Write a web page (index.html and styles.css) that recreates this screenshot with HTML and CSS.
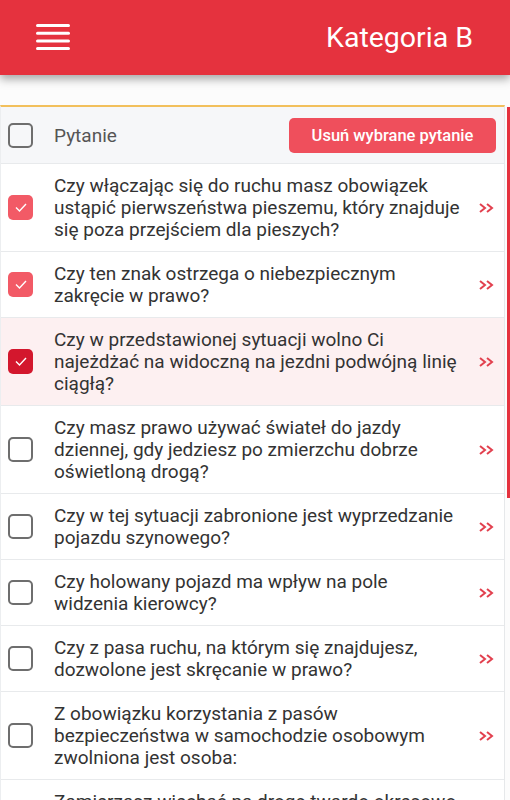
FILE: index.html
```html
<!DOCTYPE html>
<html lang="pl">
<head>
    <meta charset="UTF-8">
    <meta name="viewport" content="width=device-width, initial-scale=1.0">
    <title>Kategoria B</title>
    <link rel="stylesheet" href="styles.css">
</head>
<body>
    <header class="topbar">
        <button class="menu-btn" aria-label="Menu">
            <svg width="34" height="27" viewBox="0 0 34 27">
                <rect x="0" y="0" width="34" height="3" rx="1.5" fill="#fff"/>
                <rect x="0" y="7.7" width="34" height="3" rx="1.5" fill="#fff"/>
                <rect x="0" y="15.4" width="34" height="3" rx="1.5" fill="#fff"/>
                <rect x="0" y="23" width="34" height="3" rx="1.5" fill="#fff"/>
            </svg>
        </button>
        <h1 class="title">Kategoria B</h1>
    </header>

    <main class="list-card">
        <div class="list-head">
            <span class="box"></span>
            <span class="head-label">Pytanie</span>
            <button class="delete-btn">Usuń wybrane pytanie</button>
        </div>

        <ul class="questions">
            <li class="question">
                <span class="box checked"><svg width="12" height="9" viewBox="0 0 12 9"><polyline points="1,4.5 4.5,8 11,1" fill="none" stroke="#fff" stroke-width="1.4"/></svg></span>
                <span class="q-text">Czy włączając się do ruchu masz obowiązek ustąpić pierwszeństwa pieszemu, który znajduje się poza przejściem dla pieszych?</span>
                <svg class="chevron" width="15" height="10" viewBox="0 0 15 10"><polyline points="1,1 6,5 1,9"/><polyline points="8,1 13,5 8,9"/></svg>
            </li>
            <li class="question">
                <span class="box checked"><svg width="12" height="9" viewBox="0 0 12 9"><polyline points="1,4.5 4.5,8 11,1" fill="none" stroke="#fff" stroke-width="1.4"/></svg></span>
                <span class="q-text">Czy ten znak ostrzega o niebezpiecznym zakręcie w prawo?</span>
                <svg class="chevron" width="15" height="10" viewBox="0 0 15 10"><polyline points="1,1 6,5 1,9"/><polyline points="8,1 13,5 8,9"/></svg>
            </li>
            <li class="question active">
                <span class="box checked"><svg width="12" height="9" viewBox="0 0 12 9"><polyline points="1,4.5 4.5,8 11,1" fill="none" stroke="#fff" stroke-width="1.4"/></svg></span>
                <span class="q-text">Czy w przedstawionej sytuacji wolno Ci najeżdżać na widoczną na jezdni podwójną linię ciągłą?</span>
                <svg class="chevron" width="15" height="10" viewBox="0 0 15 10"><polyline points="1,1 6,5 1,9"/><polyline points="8,1 13,5 8,9"/></svg>
            </li>
            <li class="question">
                <span class="box"></span>
                <span class="q-text">Czy masz prawo używać świateł do jazdy dziennej, gdy jedziesz po zmierzchu dobrze oświetloną drogą?</span>
                <svg class="chevron" width="15" height="10" viewBox="0 0 15 10"><polyline points="1,1 6,5 1,9"/><polyline points="8,1 13,5 8,9"/></svg>
            </li>
            <li class="question">
                <span class="box"></span>
                <span class="q-text">Czy w tej sytuacji zabronione jest wyprzedzanie pojazdu szynowego?</span>
                <svg class="chevron" width="15" height="10" viewBox="0 0 15 10"><polyline points="1,1 6,5 1,9"/><polyline points="8,1 13,5 8,9"/></svg>
            </li>
            <li class="question">
                <span class="box"></span>
                <span class="q-text">Czy holowany pojazd ma wpływ na pole widzenia kierowcy?</span>
                <svg class="chevron" width="15" height="10" viewBox="0 0 15 10"><polyline points="1,1 6,5 1,9"/><polyline points="8,1 13,5 8,9"/></svg>
            </li>
            <li class="question">
                <span class="box"></span>
                <span class="q-text">Czy z pasa ruchu, na którym się znajdujesz, dozwolone jest skręcanie w prawo?</span>
                <svg class="chevron" width="15" height="10" viewBox="0 0 15 10"><polyline points="1,1 6,5 1,9"/><polyline points="8,1 13,5 8,9"/></svg>
            </li>
            <li class="question">
                <span class="box"></span>
                <span class="q-text">Z obowiązku korzystania z pasów bezpieczeństwa w samochodzie osobowym zwolniona jest osoba:</span>
                <svg class="chevron" width="15" height="10" viewBox="0 0 15 10"><polyline points="1,1 6,5 1,9"/><polyline points="8,1 13,5 8,9"/></svg>
            </li>
            <li class="question">
                <span class="box"></span>
                <span class="q-text">Zamierzasz wjechać na drogę twardo okresowo zamkniętą dla ruchu. Czy możesz to zrobić?</span>
                <svg class="chevron" width="15" height="10" viewBox="0 0 15 10"><polyline points="1,1 6,5 1,9"/><polyline points="8,1 13,5 8,9"/></svg>
            </li>
        </ul>

        <div class="scroll-thumb"></div>
    </main>
</body>
</html>
```

FILE: styles.css
```css
html, body {
    margin: 0;
    height: 100%;
    overflow: hidden;
}
body {
    font-family: Roboto, "Noto Sans", sans-serif;
    background: #fcfcfc;
    color: #333;
}
.topbar {
    height: 75px;
    background: #e5323e;
    display: flex;
    align-items: center;
    justify-content: space-between;
    padding: 0 37px 0 36px;
    box-shadow: 0 4px 9px rgba(0,0,0,0.35);
    position: relative;
    z-index: 2;
}
.menu-btn {
    background: none;
    border: none;
    padding: 0;
    display: flex;
    cursor: pointer;
}
.title {
    margin: 0;
    color: #fff;
    font-size: 28.5px;
    font-weight: 400;
}
.list-card {
    position: relative;
    margin: 30px 5px 0 0;
    background: #fff;
    border-top: 2px solid #f2c05c;
    border-left: 1px solid #eceef0;
    border-right: 1px solid #e6e8ea;
}
.list-head {
    height: 56px;
    display: flex;
    align-items: center;
    padding: 0 8px 0 7px;
    background: #f6f7f9;
    border-bottom: 1px solid #e8eaec;
}
.box {
    flex: none;
    width: 25px;
    height: 25px;
    box-sizing: border-box;
    border: 2px solid #6e6e6e;
    border-radius: 5px;
    display: flex;
    align-items: center;
    justify-content: center;
}
.box.checked {
    border: none;
    background: #f25a66;
}
.active .box.checked {
    background: #d3172d;
}
.head-label {
    margin-left: 21px;
    font-size: 19px;
    color: #555;
}
.delete-btn {
    margin-left: auto;
    width: 207px;
    height: 35px;
    border: none;
    border-radius: 5px;
    background: #ef4f5c;
    color: #fff;
    font-family: Roboto, sans-serif;
    font-size: 16.5px;
    font-weight: 500;
    cursor: pointer;
}
.questions {
    list-style: none;
    margin: 0;
    padding: 0;
}
.question {
    display: flex;
    align-items: center;
    padding: 10.5px 10px 10.5px 7px;
    border-bottom: 1px solid #e8eaec;
}
.question.active {
    background: #fdf0f1;
}
.q-text {
    flex: 1;
    margin-left: 21px;
    font-size: 19px;
    line-height: 22px;
    color: #333;
}
.chevron {
    flex: none;
    margin-left: 19px;
}
.chevron polyline {
    fill: none;
    stroke: #e2404e;
    stroke-width: 2;
}
.scroll-thumb {
    position: absolute;
    top: 0;
    right: -6px;
    width: 3px;
    height: 391px;
    background: #e5323e;
}
```
